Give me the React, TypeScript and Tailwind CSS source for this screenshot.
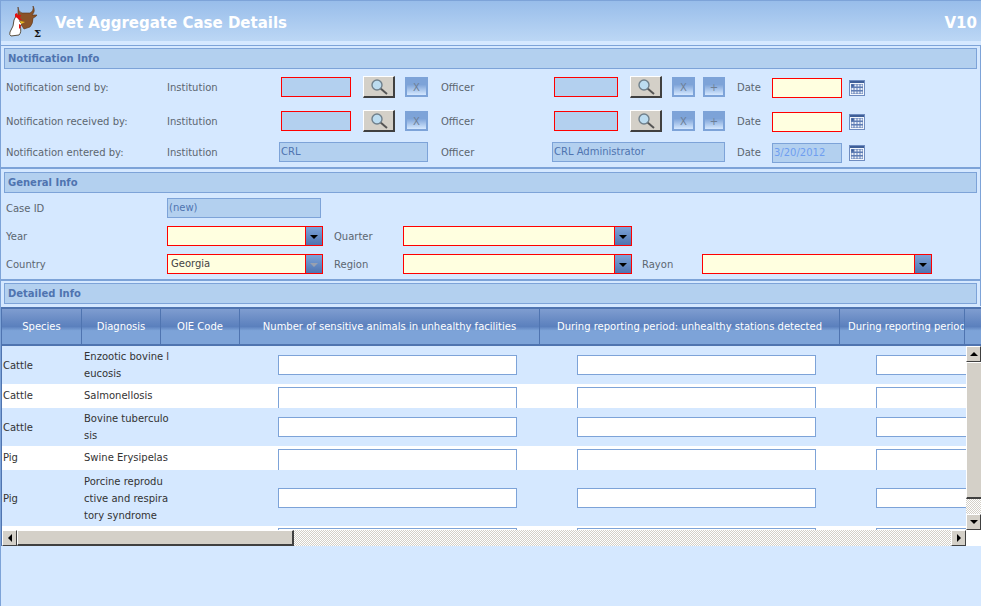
import React from "react";

const FONT = "font-['DejaVu_Sans',sans-serif]";

function Logo() {
  return (
    <svg width="38" height="38" viewBox="0 0 38 38" className="shrink-0">
      <path d="M13 5 Q13 10 17 11 L25 11 Q29 9 28 4 Q31 9 27 13 L32 13 Q31 15 28 16 Q28 22 25 25 L19 27 L13 18 Z" fill="#8a5328" stroke="#5c3414" strokeWidth="0.6" />
      <path d="M11 14 Q16 16 15 20 L17 22 L15 24 Q17 30 14 33 L6 34 Q4 33 5 30 Q9 24 9 18 Z" fill="#fff" stroke="#5a5040" strokeWidth="1" />
      <path d="M10 12 L12 11 L13 13 L16 13 L15 16 L17 18 L14 18 Q12 15 10 15 Z" fill="#e01010" />
      <path d="M15 19 L20 20 L16 22 Z" fill="#f0c020" />
      <path d="M14 22 L16 23 L15 27 L14 26 Z" fill="#e01010" />
      <text x="29" y="35" fontSize="10" fontWeight="700" fontFamily="'DejaVu Serif',serif" fill="#111">Σ</text>
    </svg>
  );
}

function SearchBtn({ cls = "" }: { cls?: string }) {
  return (
    <div className={`w-[32px] h-[22px] bg-[#d4d0c8] border-t border-l border-t-white border-l-white border-r-2 border-b-2 border-r-[#404040] border-b-[#404040] flex items-center justify-center ${cls}`}>
      <svg width="20" height="18" viewBox="0 0 20 18">
        <line x1="11" y1="10" x2="18" y2="16" stroke="#555" strokeWidth="2" />
        <circle cx="8" cy="7" r="5" fill="#bcdcf0" stroke="#70808c" strokeWidth="1.4" />
      </svg>
    </div>
  );
}

function SmallBtn({ t, w = "w-[23px]", cls = "" }: { t: string; w?: string; cls?: string }) {
  return (
    <div className={`${w} h-[20px] border-2 border-[#7da3d8] bg-[linear-gradient(#7da3d8_0%,#7da3d8_35%,#d5e8ff_100%)] flex items-center justify-center text-[10px] text-[#6d7f96] ${cls}`}>
      {t}
    </div>
  );
}

function Calendar() {
  return (
    <svg width="16" height="16" viewBox="0 0 16 16" className="shrink-0">
      <rect x="0.5" y="0.5" width="15" height="15" fill="#f2f6fc" stroke="#6f8cc0" />
      <rect x="1" y="1" width="14" height="2" fill="#3f5f98" />
      <rect x="2" y="4" width="12" height="10" fill="#5f7db4" />
      {[4, 7.5, 11].map((y) =>
        [2.5, 5.5, 8.5, 11.5].map((x) => (
          <rect key={`${x}-${y}`} x={x} y={y + 0.5} width="2" height="2" fill={x === 2.5 && y === 4 ? "#3f5f98" : "#e8eef8"} />
        ))
      )}
    </svg>
  );
}

function RedBox({ w, bg = "bg-[#b3d0ef]", cls = "" }: { w: string; bg?: string; cls?: string }) {
  return <div className={`${w} h-[20px] border border-[#ff0000] ${bg} ${cls}`} />;
}

function ReadBox({ w, t, cls = "", color = "text-[#4f74b0]" }: { w: string; t: string; cls?: string; color?: string }) {
  return (
    <div className={`${w} h-[20px] border border-[#7da3d8] bg-[#b3d0ef] pl-[1px] text-[10px] leading-[18px] ${color} ${cls}`}>{t}</div>
  );
}

function Label({ t, w }: { t: string; w: string }) {
  return <div className={`${w} shrink-0 text-[10px] text-[#5c6670] whitespace-nowrap`}>{t}</div>;
}

function Combo({ w, text, disabled }: { w: string; text?: string; disabled?: boolean }) {
  return (
    <div className={`${w} h-[20px] border border-[#ff0000] bg-[#ffffe0] flex shrink-0`}>
      <div className="flex-1 pl-[3px] text-[10px] leading-[18px] text-[#444]">{text}</div>
      <div className="w-[17px] border-l border-[#ff0000] bg-[linear-gradient(#7da3d8,#4f74b0)] flex items-center justify-center">
        <div className={`w-0 h-0 border-l-[4px] border-r-[4px] border-t-[4px] border-l-transparent border-r-transparent ${disabled ? "border-t-[#98a0b0]" : "border-t-black"} mt-[2px]`} />
      </div>
    </div>
  );
}

function SectionTitle({ t }: { t: string }) {
  return (
    <div className="mx-[3px] h-[21px] border border-[#7da3d8] bg-[#b3d0ef] pl-[3px] text-[10px] font-bold leading-[19px] text-[#4f74b0]">{t}</div>
  );
}

function NotifRow({ label, h, top, entered }: { label: string; h: string; top: string; entered?: boolean }) {
  return (
    <div className={`${h} ${top} flex items-center pl-[5px]`}>
      <Label t={label} w="w-[161px]" />
      <Label t="Institution" w={entered ? "w-[112px]" : "w-[114px]"} />
      {entered ? (
        <ReadBox w="w-[149px]" t="CRL" cls="shrink-0" />
      ) : (
        <>
          <RedBox w="w-[70px]" cls="shrink-0" />
          <SearchBtn cls="ml-[12px] shrink-0" />
          <SmallBtn t="X" cls="ml-[10px] shrink-0" />
        </>
      )}
      <Label t="Officer" w={entered ? "w-[111px] ml-[13px]" : "w-[113px] ml-[13px]"} />
      {entered ? (
        <ReadBox w="w-[173px]" t="CRL Administrator" cls="shrink-0" />
      ) : (
        <>
          <RedBox w="w-[64px]" cls="shrink-0" />
          <SearchBtn cls="ml-[12px] shrink-0" />
          <SmallBtn t="X" cls="ml-[10px] shrink-0" />
          <SmallBtn t="+" w="w-[22px]" cls="ml-[8px] shrink-0" />
        </>
      )}
      <Label t="Date" w="w-[35px] ml-[12px]" />
      {entered ? (
        <ReadBox w="w-[70px]" t="3/20/2012" cls="shrink-0 mt-[2px]" color="text-[#6f9ef0]" />
      ) : (
        <RedBox w="w-[70px]" bg="bg-[#ffffe0]" cls="shrink-0 mt-[2px]" />
      )}
      <div className="ml-[7px] mt-[2px]"><Calendar /></div>
    </div>
  );
}

function InputCell({ ml, h, open }: { ml: string; h: string; open?: boolean }) {
  return <div className={`${ml} w-[239px] ${h} shrink-0 bg-white border border-[#7da3d8] ${open ? "border-b-0" : ""}`} />;
}

const rows = [
  { sp: "Cattle", dx: ["Enzootic bovine l", "eucosis"], h: "h-[38px]", bg: "bg-[#d5e8ff]" },
  { sp: "Cattle", dx: ["Salmonellosis"], h: "h-[24px]", bg: "bg-white", open: true },
  { sp: "Cattle", dx: ["Bovine tuberculo", "sis"], h: "h-[38px]", bg: "bg-[#d5e8ff]" },
  { sp: "Pig", dx: ["Swine Erysipelas"], h: "h-[24px]", bg: "bg-white", open: true },
  { sp: "Pig", dx: ["Porcine reprodu", "ctive and respira", "tory syndrome"], h: "h-[56px]", bg: "bg-[#d5e8ff]" },
];

function HeadCell({ w, t, cls = "" }: { w: string; t: string; cls?: string }) {
  return (
    <div className={`${w} shrink-0 border-r border-[#4f74b0] flex items-center justify-center whitespace-nowrap overflow-hidden text-[10px] text-white ${cls}`}>{t}</div>
  );
}

function ArrowBtn({ dir, cls = "" }: { dir: "l" | "r" | "u" | "d"; cls?: string }) {
  const a = {
    l: "border-y-[4px] border-y-transparent border-r-[4px] border-r-black",
    r: "border-y-[4px] border-y-transparent border-l-[4px] border-l-black",
    u: "border-x-[4px] border-x-transparent border-b-[4px] border-b-black",
    d: "border-x-[4px] border-x-transparent border-t-[4px] border-t-black",
  }[dir];
  return (
    <div className={`w-[15px] h-[16px] shrink-0 bg-[#d4d0c8] border-t border-l border-t-white border-l-white border-r border-b border-r-[#404040] border-b-[#404040] flex items-center justify-center ${cls}`}>
      <div className={`w-0 h-0 ${a}`} />
    </div>
  );
}

const CHECK = "bg-[repeating-conic-gradient(#d4d0c8_0_25%,#ffffff_0_50%)] bg-[length:2px_2px]";

export default function App() {
  return (
    <div className={`${FONT} w-[981px] h-[606px] overflow-hidden bg-[#d5e8ff] border-l border-[#7da3d8]`}>
      {/* Title bar */}
      <div className="h-[41px] border-t border-[#7da3d8] bg-[linear-gradient(#98bdea,#bcd7f5)] flex items-center pl-[4px] pr-[4px]">
        <Logo />
        <div className="ml-[12px] text-[15px] font-bold text-white leading-none mt-[5px] whitespace-nowrap">Vet Aggregate Case Details</div>
        <div className="ml-auto text-[15px] font-bold text-white leading-none mt-[5px]">V10</div>
      </div>

      {/* Notification */}
      <div className="mt-[4px] h-[124px] border-t border-r border-b-2 border-[#7da3d8] pt-[2px]">
        <SectionTitle t="Notification Info" />
        <NotifRow label="Notification send by:" h="h-[22px]" top="mt-[7px]" />
        <NotifRow label="Notification received by:" h="h-[22px]" top="mt-[12px]" />
        <NotifRow label="Notification entered by:" h="h-[22px]" top="mt-[9px]" entered />
      </div>

      {/* General */}
      <div className="h-[112px] border-r border-b-2 border-[#7da3d8] pt-[3px]">
        <SectionTitle t="General Info" />
        <div className="mt-[5px] h-[20px] flex items-center pl-[5px]">
          <Label t="Case ID" w="w-[161px]" />
          <ReadBox w="w-[154px]" t="(new)" />
        </div>
        <div className="mt-[8px] h-[20px] flex items-center pl-[5px]">
          <Label t="Year" w="w-[161px]" />
          <Combo w="w-[156px]" />
          <Label t="Quarter" w="w-[69px] ml-[11px]" />
          <Combo w="w-[229px]" />
        </div>
        <div className="mt-[8px] h-[20px] flex items-center pl-[5px]">
          <Label t="Country" w="w-[161px]" />
          <Combo w="w-[156px]" text="Georgia" disabled />
          <Label t="Region" w="w-[69px] ml-[11px]" />
          <Combo w="w-[229px]" />
          <Label t="Rayon" w="w-[60px] ml-[10px]" />
          <Combo w="w-[230px]" />
        </div>
      </div>

      {/* Detailed */}
      <div className="pt-[2px] h-[25px] border-r border-[#7da3d8]">
        <SectionTitle t="Detailed Info" />
      </div>

      {/* Grid */}
      <div className="mt-[1px] h-[239px] border-l border-b border-[#4f74b0] flex flex-col">
        <div className="h-[39px] shrink-0 flex border-y-2 border-[#4f74b0] bg-[linear-gradient(#7f9dd0_0%,#5b80bd_50%,#7da3d8_62%,#7da3d8_100%)]">
          <HeadCell w="w-[80px]" t="Species" />
          <HeadCell w="w-[79px]" t="Diagnosis" />
          <HeadCell w="w-[79px]" t="OIE Code" />
          <HeadCell w="w-[300px]" t="Number of sensitive animals in unhealthy facilities" />
          <HeadCell w="w-[300px]" t="During reporting period: unhealthy stations detected" />
          <HeadCell w="w-[125px]" t="During reporting period: unhealthy" cls="justify-start pl-[8px]" />
          <div className="flex-1" />
        </div>
        <div className="flex h-[184px] shrink-0">
          <div className="w-[964px] shrink-0 overflow-hidden">
            {rows.map((r, i) => (
              <div key={i} className={`${r.h} ${r.bg} flex items-center text-[10px] text-[#333] overflow-hidden ${r.open ? "items-start pt-[3px]" : ""}`}>
                <div className={`w-[80px] pl-[1px] shrink-0 ${r.open ? "leading-[18px]" : ""}`}>{r.sp}</div>
                <div className={`w-[79px] pl-[2px] shrink-0 whitespace-nowrap ${r.dx.length > 1 ? "leading-[17px]" : "leading-[18px]"}`}>
                  {r.dx.map((l) => (<div key={l}>{l}</div>))}
                </div>
                <div className="w-[79px] shrink-0" />
                <InputCell ml="ml-[38px]" h={r.open ? "h-[21px]" : "h-[20px]"} open={r.open} />
                <InputCell ml="ml-[60px]" h={r.open ? "h-[21px]" : "h-[20px]"} open={r.open} />
                <InputCell ml="ml-[60px]" h={r.open ? "h-[21px]" : "h-[20px]"} open={r.open} />
              </div>
            ))}
            <div className="h-[4px] bg-white flex items-start pt-[2px] overflow-hidden">
              <div className="w-[238px] shrink-0" />
              <InputCell ml="ml-[38px]" h="h-[20px]" />
              <InputCell ml="ml-[60px]" h="h-[20px]" />
              <InputCell ml="ml-[60px]" h="h-[20px]" />
            </div>
          </div>
          <div className="w-[15px] shrink-0 flex flex-col">
            <ArrowBtn dir="u" />
            <div className="h-[137px] shrink-0 bg-[#d4d0c8] border-l border-t border-l-white border-t-white border-b-2 border-b-[#404040]" />
            <div className={`h-[15px] shrink-0 ${CHECK}`} />
            <ArrowBtn dir="d" />
          </div>
        </div>
        <div className="flex h-[16px] shrink-0">
          <ArrowBtn dir="l" />
          <div className="w-[277px] shrink-0 bg-[#d4d0c8] border-t border-l border-t-white border-l-white border-r-2 border-b-2 border-r-[#404040] border-b-[#404040]" />
          <div className={`w-[657px] shrink-0 ${CHECK}`} />
          <ArrowBtn dir="r" />
          <div className="flex-1 bg-white" />
        </div>
      </div>
    </div>
  );
}
